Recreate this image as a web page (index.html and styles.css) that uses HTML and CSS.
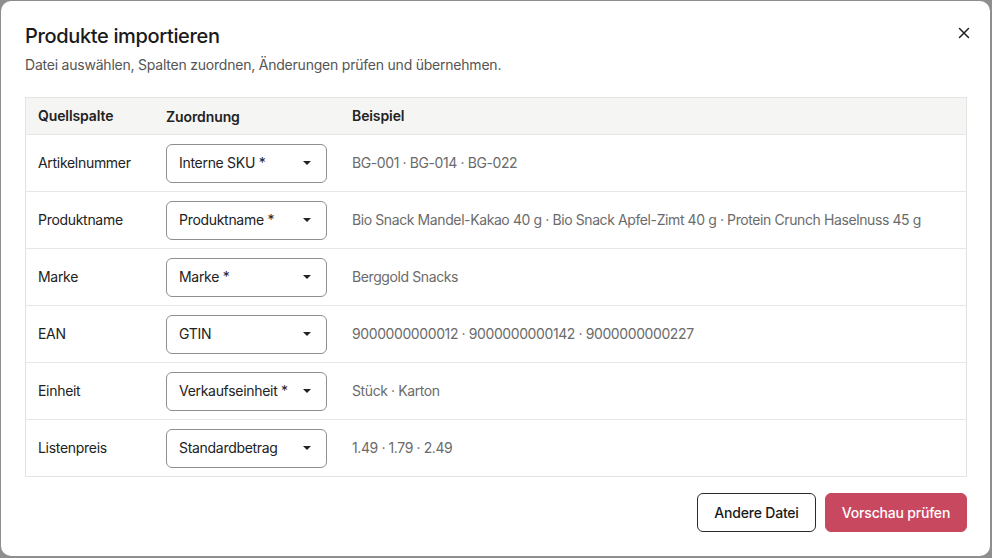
FILE: index.html
```html
<!DOCTYPE html>
<html lang="de">
<head>
<meta charset="utf-8">
<link rel="stylesheet" href="styles.css">
</head>
<body>
<div class="dialog">
  <div class="head">
    <div>
      <h1 class="title">Produkte importieren</h1>
      <p class="sub">Datei auswählen, Spalten zuordnen, Änderungen prüfen und übernehmen.</p>
    </div>
    <button class="close" aria-label="Schließen">
      <svg width="12" height="12" viewBox="0 0 12 12"><path d="M1.5 1.5L10.5 10.5M10.5 1.5L1.5 10.5" stroke="#222" stroke-width="1.5" stroke-linecap="round"/></svg>
    </button>
  </div>
  <div class="table">
    <div class="row hdr">
      <div class="c1">Quellspalte</div><div class="c2">Zuordnung</div><div class="c3">Beispiel</div>
    </div>
    <div class="row">
      <div class="c1">Artikelnummer</div>
      <div class="c2"><div class="select"><span>Interne SKU *</span><i class="caret"></i></div></div>
      <div class="c3 ex">BG-001 · BG-014 · BG-022</div>
    </div>
    <div class="row">
      <div class="c1">Produktname</div>
      <div class="c2"><div class="select"><span>Produktname *</span><i class="caret"></i></div></div>
      <div class="c3 ex">Bio Snack Mandel-Kakao 40 g · Bio Snack Apfel-Zimt 40 g · Protein Crunch Haselnuss 45 g</div>
    </div>
    <div class="row">
      <div class="c1">Marke</div>
      <div class="c2"><div class="select"><span>Marke *</span><i class="caret"></i></div></div>
      <div class="c3 ex">Berggold Snacks</div>
    </div>
    <div class="row">
      <div class="c1">EAN</div>
      <div class="c2"><div class="select"><span>GTIN</span><i class="caret"></i></div></div>
      <div class="c3 ex">9000000000012 · 9000000000142 · 9000000000227</div>
    </div>
    <div class="row">
      <div class="c1">Einheit</div>
      <div class="c2"><div class="select"><span>Verkaufseinheit *</span><i class="caret"></i></div></div>
      <div class="c3 ex">Stück · Karton</div>
    </div>
    <div class="row">
      <div class="c1">Listenpreis</div>
      <div class="c2"><div class="select"><span>Standardbetrag</span><i class="caret"></i></div></div>
      <div class="c3 ex">1.49 · 1.79 · 2.49</div>
    </div>
  </div>
  <div class="foot">
    <button class="btn secondary">Andere Datei</button>
    <button class="btn primary">Vorschau prüfen</button>
  </div>
</div>
</body>
</html>
```
FILE: styles.css
```css
* { box-sizing: border-box; }
html, body { margin: 0; padding: 0; }
body {
  background: #8e8e8e;
  font-family: Inter, "Noto Sans", "Liberation Sans", sans-serif;
  color: #1f1f1f;
  width: 992px;
  height: 558px;
  padding: 1px 2px 2px 1px;
}
.dialog {
  background: #fff;
  border-radius: 10px;
  height: 555px;
  padding: 20px 23px 0 24px;
  display: flex;
  flex-direction: column;
}
.head {
  display: flex;
  justify-content: space-between;
  align-items: flex-start;
}
.title {
  margin: 1px 0 0 0;
  font-size: 20px;
  font-weight: 500;
  letter-spacing: -0.35px;
  line-height: 28px;
  color: #1a1a1a;
}
.sub {
  margin: 5px 0 0 0;
  font-size: 14px;
  line-height: 20px;
  letter-spacing: -0.22px;
  color: #555;
}
.close {
  border: 0;
  background: none;
  padding: 0;
  margin: 2px -7px 0 0;
  width: 20px;
  height: 20px;
  display: flex;
  align-items: center;
  justify-content: center;
  cursor: pointer;
}
.table {
  margin-top: 22px;
  border: 1px solid #e3e3e1;
  font-size: 14px;
  letter-spacing: -0.3px;
}
.row {
  display: grid;
  grid-template-columns: 128px 186px 1fr;
  align-items: center;
  height: 57px;
  border-top: 1px solid #e6e6e4;
}
.row.hdr {
  height: 36px;
  border-top: 0;
  background: #f5f5f4;
  font-weight: 600;
  letter-spacing: -0.1px;
  color: #222;
}
.row > div { padding-left: 12px; }
.c1, .c3 { padding-bottom: 2px; }
.c1 { color: #222; }
.ex { color: #6b6b6b; white-space: nowrap; letter-spacing: -0.4px; }
.select {
  width: 161px;
  height: 39px;
  border: 1px solid #8f8f8f;
  border-radius: 6px;
  display: flex;
  align-items: center;
  justify-content: space-between;
  padding: 0 15px 1px 12px;
  color: #222;
  white-space: nowrap;
}
.caret {
  flex: none;
  width: 0;
  height: 0;
  border-left: 4px solid transparent;
  border-right: 4px solid transparent;
  border-top: 4px solid #222;
}
.foot {
  display: flex;
  justify-content: flex-end;
  gap: 9px;
  margin-top: 16px;
}
.btn {
  height: 39px;
  border-radius: 6px;
  font-family: inherit;
  font-size: 14px;
  font-weight: 500;
  letter-spacing: -0.2px;
  padding: 0;
  white-space: nowrap;
  cursor: pointer;
}
.secondary {
  width: 119px;
  background: #fff;
  border: 1px solid #2a2a2a;
  color: #1a1a1a;
}
.primary {
  width: 142px;
  background: #c8485f;
  border: 1px solid #c8485f;
  color: #fff;
}
```
